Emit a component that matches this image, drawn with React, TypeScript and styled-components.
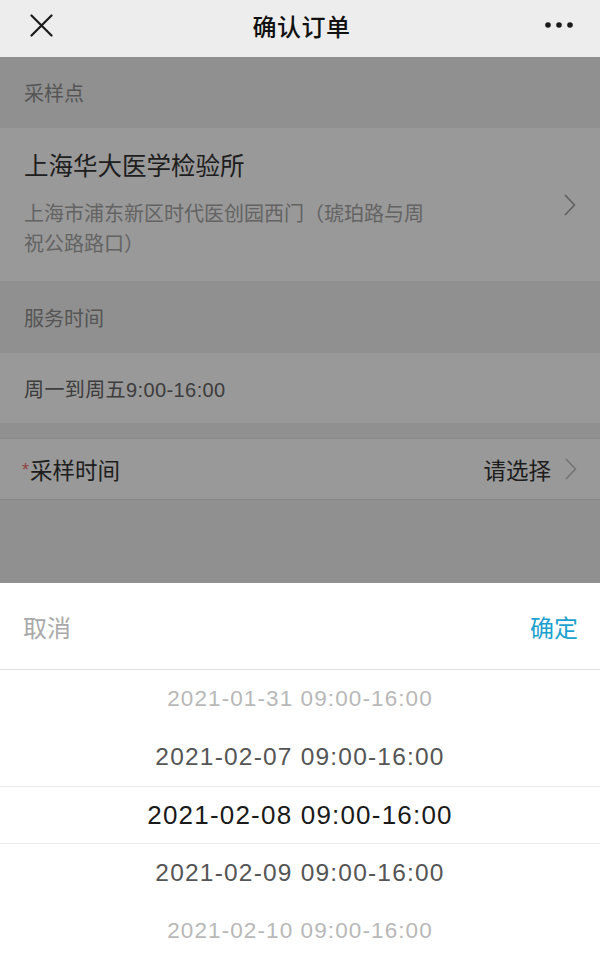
import styled, { createGlobalStyle } from "styled-components";

const GlobalStyle = createGlobalStyle`
  html, body {
    margin: 0;
    padding: 0;
    background: #fff;
  }
  body {
    font-family: "Liberation Sans", "Noto Sans CJK SC", sans-serif;
    -webkit-font-smoothing: antialiased;
  }
  * {
    box-sizing: border-box;
  }
`;

const Screen = styled.div`
  width: 600px;
  height: 963px;
  display: flex;
  flex-direction: column;
  overflow: hidden;
`;

const NavBar = styled.header`
  height: 57px;
  flex-shrink: 0;
  background: #ededed;
  display: grid;
  grid-template-columns: 100px 1fr 100px;
  align-items: center;
  padding: 0 27px 7px 30px;
`;

const NavTitle = styled.h1`
  margin: 0;
  text-align: center;
  font-size: 24px;
  font-weight: 500;
  color: #111;
  letter-spacing: 0.5px;
`;

const NavSide = styled.div<{ $end?: boolean }>`
  display: flex;
  align-items: center;
  justify-content: ${(p) => (p.$end ? "flex-end" : "flex-start")};
`;

const Body = styled.main`
  position: relative;
  height: 526px;
  flex-shrink: 0;
  background: #f0f0f0;
  display: flex;
  flex-direction: column;
  overflow: hidden;
`;

const SectionLabel = styled.div<{ $h: number }>`
  height: ${(p) => p.$h}px;
  padding: 0 24px;
  display: flex;
  align-items: center;
  font-size: 20px;
  color: #8e8e8e;
`;

const SiteCard = styled.div`
  background: #fff;
  padding: 23px 24px 22px 24px;
  display: flex;
  align-items: center;
  justify-content: space-between;
`;

const SiteInfo = styled.div`
  display: flex;
  flex-direction: column;
  gap: 16px;
`;

const SiteName = styled.div`
  font-size: 24.5px;
  line-height: 32px;
  color: #333;
`;

const SiteAddress = styled.div`
  max-width: 412px;
  font-size: 20px;
  line-height: 30px;
  color: #a6a6a6;
`;

const PlainCard = styled.div`
  height: 70px;
  background: #fff;
  padding: 0 24px;
  display: flex;
  align-items: center;
  font-size: 20px;
  letter-spacing: 0.4px;
  color: #666;
`;

const Spacer = styled.div<{ $h: number }>`
  height: ${(p) => p.$h}px;
`;

const PickRow = styled.div`
  height: 62px;
  background: #fff;
  border-top: 1px solid #e6e6e6;
  border-bottom: 1px solid #e2e2e2;
  padding: 0 23px 0 22px;
  display: flex;
  align-items: center;
  justify-content: space-between;
  font-size: 22.5px;
  color: #333;
`;

const Required = styled.span`
  color: #f2706a;
  font-size: 18px;
  margin-right: 1px;
  position: relative;
  top: -3px;
`;

const PickValue = styled.div`
  display: flex;
  align-items: center;
  gap: 14px;
`;

const Dimmer = styled.div`
  position: absolute;
  inset: 0;
  background: rgba(0, 0, 0, 0.4);
`;

const Sheet = styled.section`
  flex: 1;
  background: #fff;
  display: flex;
  flex-direction: column;
`;

const SheetHeader = styled.div`
  height: 87px;
  flex-shrink: 0;
  border-bottom: 1px solid #e2e2e2;
  padding: 0 22px 0 23px;
  display: flex;
  align-items: center;
  justify-content: space-between;
  font-size: 24px;
`;

const SheetButton = styled.span<{ $primary?: boolean }>`
  color: ${(p) => (p.$primary ? "#1ba1cf" : "#a9a9a9")};
`;

const Wheel = styled.ul`
  margin: 0;
  padding: 0;
  list-style: none;
  display: flex;
  flex-direction: column;
`;

const levels = [
  { size: 26, color: "#1a1a1a", spacing: 1.2 },
  { size: 24.5, color: "#555", spacing: 1.2 },
  { size: 22.5, color: "#b8b8b8", spacing: 1.1 },
];

const WheelItem = styled.li<{ $level: number; $selected?: boolean }>`
  height: 58px;
  display: flex;
  align-items: center;
  justify-content: center;
  font-family: "Liberation Sans", sans-serif;
  font-size: ${(p) => levels[p.$level].size}px;
  letter-spacing: ${(p) => levels[p.$level].spacing}px;
  color: ${(p) => levels[p.$level].color};
  border-top: 1px solid ${(p) => (p.$selected ? "#ebebeb" : "transparent")};
  border-bottom: 1px solid ${(p) => (p.$selected ? "#ebebeb" : "transparent")};
`;

const CloseIcon = () => (
  <svg width="23" height="23" viewBox="0 0 23 23">
    <path d="M1.5 1.5 L21.5 21.5 M21.5 1.5 L1.5 21.5" stroke="#1a1a1a" strokeWidth="2.2" strokeLinecap="round" />
  </svg>
);

const MoreIcon = () => (
  <svg width="28" height="8" viewBox="0 0 28 8">
    <circle cx="3" cy="4" r="2.8" fill="#1a1a1a" />
    <circle cx="14" cy="4" r="2.8" fill="#1a1a1a" />
    <circle cx="25" cy="4" r="2.8" fill="#1a1a1a" />
  </svg>
);

const Chevron = ({ color }: { color: string }) => (
  <svg width="12" height="22" viewBox="0 0 12 22">
    <path d="M1.5 1.5 L10.5 11 L1.5 20.5" fill="none" stroke={color} strokeWidth="1.8" strokeLinecap="round" strokeLinejoin="round" />
  </svg>
);

const slots = [
  { text: "2021-01-31 09:00-16:00", level: 2 },
  { text: "2021-02-07 09:00-16:00", level: 1 },
  { text: "2021-02-08 09:00-16:00", level: 0, selected: true },
  { text: "2021-02-09 09:00-16:00", level: 1 },
  { text: "2021-02-10 09:00-16:00", level: 2 },
];

export default function App() {
  return (
    <>
      <GlobalStyle />
      <Screen>
        <NavBar>
          <NavSide>
            <CloseIcon />
          </NavSide>
          <NavTitle>确认订单</NavTitle>
          <NavSide $end>
            <MoreIcon />
          </NavSide>
        </NavBar>

        <Body>
          <SectionLabel $h={71}>采样点</SectionLabel>
          <SiteCard>
            <SiteInfo>
              <SiteName>上海华大医学检验所</SiteName>
              <SiteAddress>上海市浦东新区时代医创园西门（琥珀路与周祝公路路口）</SiteAddress>
            </SiteInfo>
            <Chevron color="#a3a3a3" />
          </SiteCard>
          <SectionLabel $h={72}>服务时间</SectionLabel>
          <PlainCard>周一到周五9:00-16:00</PlainCard>
          <Spacer $h={15} />
          <PickRow>
            <div>
              <Required>*</Required>采样时间
            </div>
            <PickValue>
              请选择
              <Chevron color="#c4c4c4" />
            </PickValue>
          </PickRow>
          <Dimmer />
        </Body>

        <Sheet>
          <SheetHeader>
            <SheetButton>取消</SheetButton>
            <SheetButton $primary>确定</SheetButton>
          </SheetHeader>
          <Wheel>
            {slots.map((s) => (
              <WheelItem key={s.text} $level={s.level} $selected={s.selected}>
                {s.text}
              </WheelItem>
            ))}
          </Wheel>
        </Sheet>
      </Screen>
    </>
  );
}
